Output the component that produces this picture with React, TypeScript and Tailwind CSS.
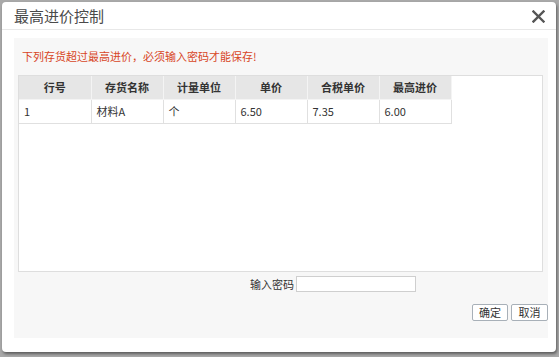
import React from 'react'

const columns = ['行号', '存货名称', '计量单位', '单价', '合税单价', '最高进价']
const rows = [['1', '材料A', '个', '6.50', '7.35', '6.00']]

export default function App() {
    return (
        <div className="h-[357px] w-[559px] overflow-hidden bg-[#a9a9a9] pl-[2px] pt-[2px]" style={{ fontFamily: '"Noto Sans CJK SC", "Liberation Sans", sans-serif' }}>
            <div className="flex h-[350px] w-[554px] flex-col rounded-[4px] bg-white shadow-[1px_2px_3px_rgba(0,0,0,0.45)]">
                {/* title bar */}
                <div className="flex h-[28px] items-center justify-between border-b border-[#e8e8e8] pl-3 pr-[11px]">
                    <span className="text-[15px] leading-none text-[#4a4a4a]">最高进价控制</span>
                    <svg width="13" height="13" viewBox="0 0 13 13" className="mt-[1px]">
                        <path d="M1.5 1.5 L11.5 11.5 M11.5 1.5 L1.5 11.5" stroke="#555" strokeWidth="2.4" strokeLinecap="square" />
                    </svg>
                </div>

                {/* body */}
                <div className="ml-3 mr-2 mt-2 flex h-[300px] flex-col bg-[#f7f7f7]">
                    <div className="pl-2 pt-[11px] text-[11px] leading-[14px] text-[#d8461f]">
                        下列存货超过最高进价，必须输入密码才能保存!
                    </div>

                    <div className="ml-1 mr-[5px] mt-[12px] h-[197px] border border-[#dedede] bg-white">
                        <table className="table-fixed border-collapse text-[11px] text-[#333]">
                            <thead>
                                <tr className="h-[23px] bg-[#e6e6e6]">
                                    {columns.map((c) => (
                                        <th key={c} className="w-[72px] border-r border-b border-[#f4f4f4] text-center font-bold">
                                            {c}
                                        </th>
                                    ))}
                                </tr>
                            </thead>
                            <tbody>
                                {rows.map((r, i) => (
                                    <tr key={i} className="h-[24px]">
                                        {r.map((v, j) => (
                                            <td key={j} className="w-[72px] border-r border-b border-[#e0e0e0] pl-[5px] text-left">
                                                {v}
                                            </td>
                                        ))}
                                    </tr>
                                ))}
                            </tbody>
                        </table>
                    </div>

                    <div className="ml-[236px] mt-[4px] flex items-center gap-[2px]">
                        <span className="text-[11px] leading-none text-[#333]">输入密码</span>
                        <input type="password" className="h-[16px] w-[120px] border border-[#cfcfcf] bg-white outline-none" />
                    </div>

                    <div className="mt-[12px] flex justify-end gap-[3px]">
                        <button className="h-[17px] w-[36px] rounded-[2px] border border-[#a8b0b8] bg-white text-[11px] leading-none text-[#333]">确定</button>
                        <button className="h-[17px] w-[37px] rounded-[2px] border border-[#a8b0b8] bg-white text-[11px] leading-none text-[#333]">取消</button>
                    </div>
                </div>
            </div>
        </div>
    )
}
